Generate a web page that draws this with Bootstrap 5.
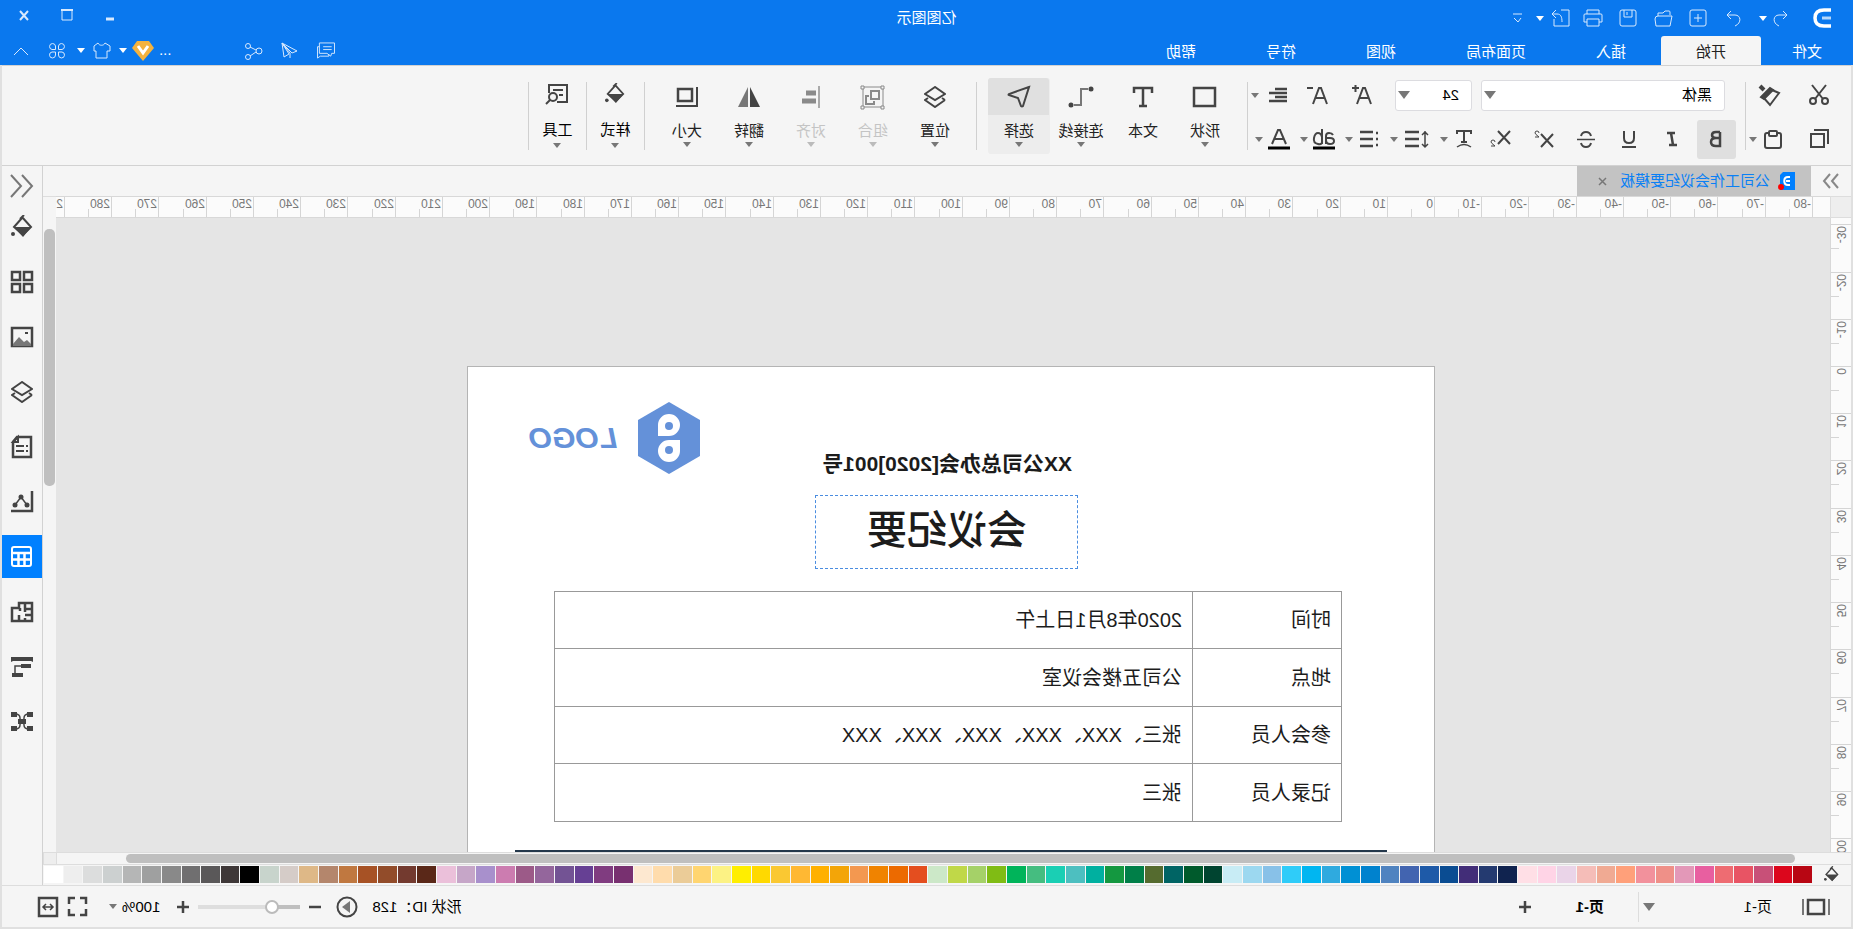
<!DOCTYPE html>
<html lang="zh-CN">
<head>
<meta charset="utf-8">
<meta name="viewport" content="width=device-width, initial-scale=1">
<title>亿图图示</title>
<link href="https://cdn.jsdelivr.net/npm/bootstrap@5.3.0/dist/css/bootstrap.min.css" rel="stylesheet">
<style>
  :root { --brand:#0a78ee; --panel:#f5f5f5; --line:#d2d2d2; --ink:#444; }
  body { font-family:"Liberation Sans","Noto Sans CJK SC",sans-serif; font-size:15px; line-height:20px; color:#111; background:#e0e0e0; overflow:hidden; }
  /* the whole window is shown flipped left to right */
  .app { height:100vh; transform:scaleX(-1); }
  .app button { border:0; background:none; padding:0; color:inherit; display:inline-flex; align-items:center; justify-content:center; flex:none; }
  svg { display:block; fill:none; stroke:currentColor; stroke-width:2; overflow:visible; }
  svg.solid { stroke:none; fill:currentColor; }
  .thin svg { stroke-width:1; }
  .caret { width:10px; }
  .caret::before { content:""; border:4px solid transparent; border-top:5px solid #777; border-bottom:0; }
  .titlebar { background:var(--brand); color:#d8e9fd; }
  .titlebar .caret::before { border-top-color:#fff; }
  .title-row { height:36px; padding:0 3px; }
  .title-row > div { flex:1 1 0; }
  .win-btns { height:30px; }
  .menu-row { height:29px; padding-right:3px; }
  .w12{width:12px} .w24{width:24px} .w28{width:28px} .w30{width:30px} .w35{width:35px} .w36{width:36px} .w43{width:43px} .w44{width:44px}
  .menu-tab { color:#fff; text-decoration:none; padding:6px 35px 3px; height:29px; }
  .menu-tab.first { padding-left:31px; padding-right:31px; }
  .menu-tab.active { background:var(--panel); color:#222; border-radius:3px 3px 0 0; }
  .frame { border:solid #e0e0e0; border-width:0 2px 2px; min-height:0; background:var(--panel); color:var(--ink); }
  .ribbon { height:101px; border:solid var(--line); border-width:1px 0; }
  .rule { width:1px; height:68px; background:#d0d0d0; margin-top:16px; flex:none; }
  .two-rows { display:grid; grid-template-rows:44px 44px; margin-top:7px; }
  .two-rows > div { display:flex; align-items:center; }
  .clip-gap { margin-right:13px; }
  .pick { appearance:none; border:1px solid #dcdce0; border-radius:3px; height:31px; color:#000; font-size:15px; padding:0 12px;
    background:#fff url("data:image/svg+xml,%3Csvg xmlns='http://www.w3.org/2000/svg' width='12' height='8'%3E%3Cpath d='M0 0h12L6 8z' fill='%23777'/%3E%3C/svg%3E") no-repeat right 2px center; }
  .pick.family { width:244px; margin-left:11px; } .pick.size { width:77px; margin:0 11px 0 9px; }
  .bold-on { width:39px; height:39px; background:#dfdfdf !important; border-radius:3px; margin-right:3px; }
  .combo { width:40px; display:flex; } .combo button:first-child { flex:1; }
  .combo + .combo { margin-left:5px; }
  .combo.wide { width:45px; }
  .tool { width:62px; height:76px; flex-direction:column; justify-content:flex-start !important; color:#222 !important; border-radius:3px; }
  .tool .ico { height:37px; width:61px; display:flex; align-items:center; justify-content:center; color:var(--ink); }
  .tool .txt { margin-top:6px; height:20px; } .tool .caret { margin-top:1px; height:6px; display:flex; justify-content:center; }
  .tool.active { background:#ededed; } .tool.active .ico { background:#e0e0e0; border-radius:3px 3px 0 0; }
  .tool:disabled { color:#c4c4c4 !important; } .tool:disabled .ico { color:#8a8a8a; } .tool:disabled .caret::before { border-top-color:#bbb; }
  .tool.black { width:57px; color:#000 !important; } .tool.black .ico { width:57px; height:32px; } .tool.black .txt { margin-top:10px; } .tool.black .caret { margin-top:3px; }
  .tools { margin-top:12px; }
  .doc-tabs { height:30px; } .doc-tabs > button { width:40px; color:#888; }
  .doc-tab { width:234px; background:#c3c3c3; color:#0a80f5; padding:0 20px 0 16px; }
  .doc-tab button { color:#777; }
  .work { display:grid; grid-template-columns:21px 1fr 13px; grid-template-rows:22px 1fr 13px; min-height:0; }
  .corner { background:#eee; border:solid #ddd; border-width:1px 1px 1px 0; }
  .ruler-h { display:flex; overflow:hidden; background:#fbfbfb; border:solid #d8d8d8; border-width:1px 0; color:#777; font-size:12px; line-height:14px; }
  .tick-h { flex:none; border-left:1px solid #d5d5d5; padding-left:1px; background:linear-gradient(#d5d5d5,#d5d5d5) 22px 100%/1px 8px no-repeat; }
  .ruler-v { overflow:hidden; background:#fbfbfb; border-right:1px solid #d8d8d8; color:#777; font-size:12px; line-height:14px; }
  .tick-v { border-top:1px solid #d5d5d5; padding:1px 0 0 3px; background:linear-gradient(#d5d5d5,#d5d5d5) 100% 23px/8px 1px no-repeat; }
  .tick-v span { display:block; writing-mode:vertical-rl; transform:rotate(180deg); width:14px; }
  .scroll-v { grid-column:3; grid-row:1/3; display:flex; flex-direction:column; padding:1px 1px 0; border-top:1px solid #ddd; }
  .scroll-h { grid-column:1/3; display:flex; padding:1px 0; border:1px solid #ddd; border-left:0; }
  .thumb { background:#bfbfbf; border-radius:5px; }
  .canvas { background:#e5e5e5; overflow:hidden; padding:148px 0 0 395px; min-height:0; }
  .sheet { width:968px; height:1368px; background:#fff; border:1px solid #b4b4b4; color:#1c1c1c; font-size:20px; line-height:28px; }
  .sheet-head { display:grid; padding:35px 61px 0 8px; height:224px; }
  .sheet-head > * { grid-area:1/1; }
  .brand-mark { justify-self:end; align-self:start; color:#6491d9; font:italic bold 30px/34px "Liberation Sans",sans-serif; gap:21px; }
  .sheet-title { padding:48px 0 0 61px; }
  .doc-no { font-size:21px; font-weight:700; line-height:28px; }
  .dashed { border:1px dashed #4a8de0; width:263px; height:74px; margin:17px auto 0; font-size:40px; line-height:68px; font-weight:500; }
  .facts { width:788px; margin-left:92px; border-collapse:collapse; }
  .facts th, .facts td { border:1px solid #999; height:57px; padding:0 10px; font-weight:400; }
  .facts tr:nth-child(even) > * { height:58px; }
  .facts th { width:149px; }
  .sheet hr { margin:28px 47px 0; border:0; height:2px; background:#24384c; opacity:1; }
  .palette { height:20px; padding:1px 1px 2px 0; } .palette .pour { width:39px; }
  .palette .chips { gap:1px; } .palette .chips i { flex:1 1 0; }
  .side { width:41px; border-left:1px solid var(--line); gap:12px; } .side button { height:43px; width:40px; }
  .side button.more { height:39px; margin-bottom:-12px; color:#777; }
  .side .active { background:#0080ff; color:#fff; }
  .status { height:42px; border-top:1px solid #ddd; color:#000; } .status svg { color:var(--ink); }
  .status .sep { width:1px; height:30px; background:#ddd; margin:0 34px 0 4px; }
  .zoomer { appearance:none; width:102px; height:14px; background:linear-gradient(90deg,#bfbfbf 27px,#dedede 27px) center/100% 4px no-repeat; }
  .zoomer::-webkit-slider-thumb { appearance:none; width:14px; height:14px; border-radius:50%; background:#fff; border:2px solid #bbb; }
</style>
</head>
<body>
<svg class="d-none">
  <symbol id="bucket" viewBox="0 0 22 24"><path d="M9 0l4 4M11 2L2 12l8 8 9-8-8-9" stroke-width="2"/><path d="M2 12h17l-9 10z" fill="currentColor" stroke="none"/><circle cx="20" cy="19" r="2" fill="currentColor" stroke="none"/></symbol>
  <symbol id="layers" viewBox="0 0 22 22"><path d="M11 1l10 7-10 6L1 8zM1 14l10 7 10-7-3-2M1 14l3-2"/></symbol>
  <symbol id="comments" viewBox="0 0 20 18"><path d="M1 1h16v11H9l-4 3-1-3H1zM17 5h2v12l-3-2H7v-2M4 5h9M4 8h9"/></symbol>
</svg>
<div class="app d-flex flex-column">
  <header class="titlebar thin">
    <div class="title-row d-flex">
      <div class="d-flex align-items-center">
        <svg class="me-3" width="18" height="20" style="color:#fff;margin-left:19px"><path d="M0 2h7q9 0 9 8t-9 8H0" stroke-width="3.500"/><path d="M0 10h9" stroke-width="3" opacity=".7"/></svg>
        <button class="w24 ms-1" aria-label="撤销"><svg width="15" height="17"><path d="M5 1L1 5l4 4M1 5h8c6 0 7 8 0 11"/></svg></button><button class="caret w12" aria-label="撤销列表"></button>
        <button class="w35" style="margin-left:6px" aria-label="重做"><svg width="15" height="17"><path d="M10 1l4 4-4 4M14 5H6c-6 0-7 8 0 11"/></svg></button>
        <button class="w35" aria-label="新建"><svg width="18" height="18"><rect x="1" y="1" width="16" height="16" rx="2"/><path d="M9 5v8M5 9h8"/></svg></button>
        <button class="w35" aria-label="打开"><svg width="19" height="17"><path d="M3 5V2q0-1 1-1h4l2 2h5v3M1 6h14q3 0 3 3l-1 7H3z"/></svg></button>
        <button class="w35" aria-label="保存"><svg width="18" height="18"><rect x="1" y="1" width="16" height="16" rx="2"/><path d="M5 1v7h8V1M10 3v3"/></svg></button>
        <button class="w35" aria-label="打印"><svg width="20" height="18"><path d="M4 5V1h12v4M4 13H1V6q0-1 1-1h16q1 0 1 1v7h-3M4 10h12v7H4z"/></svg></button>
        <button class="w30" aria-label="导出"><svg width="18" height="18"><path d="M9 1H1v16h15V10M17 5h-4c-4 0-5 3-5 8M14 1l4 4-4 4"/></svg></button><button class="caret w12" aria-label="导出选项"></button>
        <button class="w12" style="margin-left:10px" aria-label="自定义"><svg width="9" height="10"><path d="M0 1h9M1 5l3 4 4-4"/></svg></button>
      </div>
      <span class="align-self-center text-white">亿图图示</span>
      <div class="win-btns d-flex justify-content-end">
        <button class="w43" aria-label="最小化"><svg width="8" height="10"><path d="M0 9h8" stroke-width="3"/></svg></button>
        <button class="w43" aria-label="最大化"><svg width="12" height="12"><path d="M1 1h10v10H1z"/><path d="M0 1h12" stroke-width="2"/></svg></button>
        <button class="w43" aria-label="关闭"><svg width="10" height="9"><path d="M1 0l8 9M9 0L1 9" stroke-width="2"/></svg></button>
      </div>
    </div>
    <div class="menu-row d-flex">
      <a href="#" class="menu-tab first">文件</a><a href="#" class="menu-tab active">开始</a><a href="#" class="menu-tab">插入</a><a href="#" class="menu-tab">页面布局</a><a href="#" class="menu-tab">视图</a><a href="#" class="menu-tab">符号</a><a href="#" class="menu-tab">帮助</a>
      <button class="w36 ms-auto" aria-label="评论"><svg width="20" height="17"><use href="#comments"/></svg></button>
      <button class="w36" aria-label="发送"><svg width="17" height="17"><path d="M16 1L1 9l5 2zM16 1l-2 14-5-3zM16 1L8 11v5"/></svg></button>
      <button class="w36" aria-label="分享"><svg width="18" height="18"><circle cx="4" cy="9" r="3"/><circle cx="15" cy="4" r="2.500"/><circle cx="15" cy="15" r="2.500"/><path d="M7 8l6-3M7 10l6 4"/></svg></button>
      <span class="text-white ps-1 pt-1" style="margin-left:60px">...</span>
      <button class="w28" style="margin-left:2px" aria-label="会员"><svg class="solid" width="22" height="20"><path d="M5 0h12l5 7-11 13L0 7z" fill="#f3b23f"/><path d="M6 5l5 7 5-7" stroke="#fff" stroke-width="3" fill="none"/></svg></button><button class="caret w12" aria-label="会员选项"></button>
      <button class="w30" aria-label="皮肤"><svg width="18" height="17"><path d="M6 1L1 4v5h3v7h11V9h2V4l-4-3c-1 3-6 3-7 0z"/></svg></button><button class="caret w12" aria-label="皮肤选项"></button>
      <button class="w36" aria-label="应用"><svg width="18" height="17"><path d="M7.500 7.500H4a3 3 0 1 1 3.500-3.500zM10.500 7.500V4A3 3 0 1 1 14 7.500zM7.500 10v3A3 3 0 1 1 4 10zM10.500 10H14a3 3 0 1 1-3.500 3z"/></svg></button>
      <button class="w36" aria-label="收起"><svg width="14" height="8"><path d="M0 8l7-7 7 7"/></svg></button>
    </div>
  </header>

  <div class="frame d-flex flex-column flex-grow-1">
    <div class="ribbon d-flex flex-shrink-0">
      <div class="two-rows" style="margin-left:14px">
        <div><button class="w36 clip-gap" aria-label="剪切"><svg width="20" height="20"><circle cx="4" cy="16" r="3"/><circle cx="16" cy="16" r="3"/><path d="M3 0l11 14M17 0L6 14"/></svg></button><button class="w36" aria-label="格式刷"><svg width="22" height="21"><path d="M21 1l-4 4" stroke-width="4"/><path d="M11 3l9 9-3 2-9-9z" fill="currentColor"/><path d="M9 5L2 8l9 12 7-8"/></svg></button></div>
        <div><button class="w36 clip-gap" aria-label="复制"><svg width="20" height="20"><path d="M5 5h13v13H5zM1 15V1h14"/></svg></button><button class="w30" aria-label="粘贴"><svg width="18" height="19"><rect x="1" y="3" width="16" height="15" rx="2"/><rect x="5" y="1" width="8" height="5" rx="1" fill="#f5f5f5"/></svg></button><button class="caret" aria-label="粘贴选项"></button></div>
      </div>
      <div class="rule" style="margin-left:2px"></div>
      <div class="two-rows" style="margin-left:9px">
        <div>
          <select class="pick family" aria-label="字体"><option>黑体</option></select><select class="pick size" aria-label="字号"><option>24</option></select>
          <button class="w44" aria-label="增大字号"><svg width="20" height="20"><path d="M1 19L7 3h2l6 16M3 13h10M13 3h7M16.500 0v7" /></svg></button>
          <button class="w44" aria-label="减小字号"><svg width="20" height="20"><path d="M1 19L7 3h2l6 16M3 13h10M15 3h6"/></svg></button>
          <button class="w36" aria-label="对齐"><svg width="18" height="14"><path d="M0 1h12M0 5h18M0 9h12M0 13h18" stroke-width="2.500"/></svg></button><button class="caret" aria-label="对齐选项"></button>
        </div>
        <div>
          <button class="bold-on" aria-label="加粗"><svg width="12" height="16"><path d="M2 1v14h4q5 0 5-4t-5-4H2M2 1h4q4 0 4 3t-4 3" stroke-width="2.500"/></svg></button>
          <button class="w43" aria-label="斜体"><svg width="12" height="14"><path d="M3 1h8M1 13h8M7 1L5 13" stroke-width="2.500"/></svg></button>
          <button class="w43" aria-label="下划线"><svg width="14" height="17"><path d="M2 0v7q0 5 5 5t5-5V0M0 16h14"/></svg></button>
          <button class="w43" aria-label="删除线"><svg width="18" height="17"><path d="M14 5Q13 1 9 1T4 5M4 12q1 4 5 4t5-4"/><path d="M0 8.500h18" stroke-width="1.500"/></svg></button>
          <button class="w43" aria-label="上标"><svg width="21" height="18"><path d="M1 4l12 13M13 4L1 17"/><path d="M15 3q0-2 2-2t2 2q0 1-4 4h4" stroke-width="1"/></svg></button>
          <button class="w43" aria-label="下标"><svg width="21" height="18"><path d="M1 1l12 13M13 1L1 14"/><path d="M16 12q0-2 2-2t2 2q0 1-4 4h4" stroke-width="1"/></svg></button>
          <span class="combo"><button aria-label="文字方向"><svg width="16" height="18"><path d="M1 4V1h14v3M8 1v11M5 12h6"/><path d="M1 17q7-5 14 0" stroke-width="1.500"/></svg></button><button class="caret" aria-label="文字方向选项"></button></span>
          <span class="combo wide"><button aria-label="行距"><svg width="23" height="17"><path d="M9 1h14M9 8h14M9 15h14" stroke-width="2.500"/><path d="M3 0v16M0 4l3-3 3 3M0 13l3 3 3-3" stroke-width="1.500"/></svg></button><button class="caret" aria-label="行距选项"></button></span>
          <span class="combo"><button aria-label="项目符号"><svg width="18" height="17"><path d="M0 2h2M0 8h2M0 14h2M5 1h13M5 8h13M5 15h13" stroke-width="2.500"/></svg></button><button class="caret" aria-label="项目符号选项"></button></span>
          <span class="combo"><button aria-label="突出显示"><svg width="22" height="20"><path d="M2 6q1-2 4-2 3 0 3 3v8M9 9H5q-4 0-4 3t4 3q4 0 4-4M13 0v15M13 8q1-4 4-4t4 5-4 6-4-4"/><path d="M0 19h22" stroke="#000" stroke-width="3"/></svg></button><button class="caret" aria-label="突出显示选项"></button></span>
          <span class="combo"><button aria-label="字体颜色"><svg width="22" height="20"><path d="M4 15l6-14h2l6 14M6 10h10"/><path d="M0 19h22" stroke="#000" stroke-width="3"/></svg></button><button class="caret" aria-label="字体颜色选项"></button></span>
        </div>
      </div>
      <div class="rule" style="margin-left:2px"></div>
      <div class="tools d-flex" style="margin-left:11px">
        <button class="tool"><span class="ico"><svg width="23" height="20"><path d="M1 1h21v18H1z" stroke-width="2.500"/></svg></span><span class="txt">形状</span><span class="caret"></span></button>
        <button class="tool"><span class="ico"><svg width="20" height="20"><path d="M1 6V1h18v5M10 1v17M6 19h8" stroke-width="2.500"/></svg></span><span class="txt">文本</span></button>
        <button class="tool"><span class="ico"><svg width="24" height="20"><circle cx="2" cy="2" r="2.500" fill="currentColor" stroke="none"/><circle cx="22" cy="18" r="2.500" fill="currentColor" stroke="none"/><path d="M5 2h7v16h7" stroke="#777"/></svg></span><span class="txt">连接线</span><span class="caret"></span></button>
        <button class="tool active"><span class="ico"><svg width="22" height="22"><path d="M1 1l20 7q1 1 0 1l-9 3-3 8q-1 1-2 0z"/></svg></span><span class="txt">选择</span><span class="caret"></span></button>
      </div>
      <div class="rule" style="margin-left:11px"></div>
      <div class="tools d-flex" style="margin-left:10px">
        <button class="tool"><span class="ico"><svg width="22" height="22"><use href="#layers"/></svg></span><span class="txt">位置</span><span class="caret"></span></button>
        <button class="tool" disabled><span class="ico"><svg width="24" height="24"><path d="M2 2h20v20H2z" stroke-width="1"/><path d="M6 6h8v8H6zM16 11h3v8h-8v-3"/><path d="M1 1h3v3H1zM21 1h3v3h-3zM1 21h3v3H1zM21 21h3v3h-3z" fill="#f5f5f5" stroke-width="1"/></svg></span><span class="txt">组合</span><span class="caret"></span></button>
        <button class="tool" disabled><span class="ico"><svg width="18" height="22"><path d="M1 0v22" stroke="#aaa"/><path d="M4 7h10M4 15h14" stroke-width="5"/></svg></span><span class="txt">对齐</span><span class="caret"></span></button>
        <button class="tool"><span class="ico"><svg class="solid" width="22" height="20"><path d="M10 0v20H0z" fill="#444"/><path d="M12 0v20h10z" fill="#777"/></svg></span><span class="txt">翻转</span><span class="caret"></span></button>
        <button class="tool"><span class="ico"><svg width="22" height="20"><path d="M6 2h14v12H6z" stroke-width="2.500"/><path d="M1 0v19h21"/></svg></span><span class="txt">大小</span><span class="caret"></span></button>
      </div>
      <div class="rule" style="margin-left:11px"></div>
      <div class="tools d-flex"><button class="tool black"><span class="ico"><svg width="20" height="22"><use href="#bucket"/></svg></span><span class="txt">样式</span><span class="caret"></span></button></div>
      <div class="rule"></div>
      <div class="tools d-flex"><button class="tool black"><span class="ico"><svg width="22" height="20"><path d="M11 18H1V1h18v8M5 6h10M5 11h4"/><circle cx="15" cy="13" r="4"/><path d="M18 16l4 4"/></svg></span><span class="txt">工具</span><span class="caret"></span></button></div>
      <div class="rule"></div>
    </div>

    <div class="d-flex flex-grow-1" style="min-height:0">
      <main class="d-flex flex-column flex-grow-1" style="min-width:0">
        <div class="doc-tabs d-flex flex-shrink-0">
          <button aria-label="展开"><svg width="16" height="16"><path d="M1 1l6 7-6 7M9 1l6 7-6 7" stroke-width="2"/></svg></button>
          <div class="doc-tab d-flex align-items-center">
            <svg class="solid" width="15" height="18"><path d="M0 0h12l3 3v15H0z" fill="#0080ff"/><path d="M5 5h2c5 0 5 8 0 8H5M5 9h4" stroke="#fff" stroke-width="2" fill="none"/><circle cx="14" cy="15" r="3" fill="red"/></svg>
            <span style="margin-left:10px">公司工作会议纪要模板</span><button class="ms-auto w12" aria-label="关闭文档"><svg width="9" height="9"><path d="M1 1l7 7M8 1L1 8" stroke-width="1.500"/></svg></button>
          </div>
        </div>
        <div class="work flex-grow-1">
          <div class="corner"></div>
          <div class="ruler-h" id="rulerH"></div>
          <div class="ruler-v" id="rulerV"></div>
          <div class="canvas">
            <div class="sheet">
              <div class="sheet-head">
                <div class="sheet-title text-center"><div class="doc-no">XX公司总办会[2020]001号</div><div class="dashed">会议纪要</div></div>
                <div class="brand-mark d-flex align-items-center"><svg class="solid" width="62" height="72"><path d="M31 0l31 18v36L31 72 0 54V18z"/><path d="M42 34H31a11 11 0 1 1 11-11zM20 38h11a11 11 0 1 1-11 11z" fill="#fff"/><circle cx="31" cy="24" r="4"/><circle cx="31" cy="48" r="4"/></svg><span>LOGO</span></div>
              </div>
              <table class="facts">
                <tr><th scope="row">时间</th><td>2020年8月1日上午</td></tr>
                <tr><th scope="row">地点</th><td>公司五楼会议室</td></tr>
                <tr><th scope="row">参会人员</th><td>张三、XXX、XXX、XXX、XXX、XXX</td></tr>
                <tr><th scope="row">记录人员</th><td>张三</td></tr>
              </table>
              <hr>
            </div>
          </div>
          <div class="scroll-v"><div style="flex:31"></div><div class="thumb" style="flex:257"></div><div style="flex:365"></div></div>
          <div class="scroll-h"><div style="flex:56"></div><div class="thumb" style="flex:1669"></div><div style="flex:69"></div></div>
          <div class="corner"></div>
        </div>
        <div class="palette d-flex flex-shrink-0">
          <button class="pour" aria-label="填充"><svg width="15" height="17"><use href="#bucket"/></svg></button>
          <div class="chips d-flex flex-grow-1" id="chips"></div>
        </div>
      </main>
      <nav class="side d-flex flex-column flex-shrink-0" aria-label="面板">
        <button class="more" aria-label="折叠"><svg width="22" height="22"><path d="M11 0L1 11l10 11M22 0L12 11l10 11"/></svg></button>
        <button aria-label="填充"><svg width="22" height="24"><use href="#bucket"/></svg></button>
        <button aria-label="符号库"><svg width="22" height="22" ><path d="M1 1h8v8H1zM13 1h8v8h-8zM1 13h8v8H1zM13 13h8v8h-8z" stroke-width="2.500"/></svg></button>
        <button aria-label="图片"><svg width="22" height="20"><path d="M1 1h20v18H1z" stroke-width="2.500"/><path d="M2 17l4-4 3 2 5-5 6 7v2H2z" fill="#777" stroke="none"/><path d="M5 6h3"/></svg></button>
        <button aria-label="图层"><svg width="22" height="22"><use href="#layers"/></svg></button>
        <button aria-label="文档"><svg width="20" height="22"><path d="M1 1h14l4 5v15H1z" stroke-width="2.500"/><path d="M14 1l5 5h-5zM4 10h2M4 15h2M8 10h8M8 15h8"/></svg></button>
        <button aria-label="图表"><svg width="22" height="21"><path d="M1 0v20h21" stroke-width="2.500"/><path d="M6 14l6-8 6 8" stroke-width="1.500"/><g fill="currentColor" stroke="none"><circle cx="6" cy="14" r="2.500"/><circle cx="12" cy="6" r="2.500"/><circle cx="18" cy="14" r="2.500"/></g></svg></button>
        <button class="active" aria-label="表格"><svg width="21" height="21"><rect x="1" y="1" width="19" height="19" rx="2"/><path d="M1 7h19M1 13.500h19M7.500 7v13M13.500 7v13" stroke-width="2.500"/></svg></button>
        <button aria-label="平面图"><svg width="22" height="20"><path d="M1 1h13v5h7v13H1zM1 7h7V1M8 7v3M1 13h7M13 6v3M14 19v-6M8 16v3" stroke-width="2.500"/></svg></button>
        <button aria-label="甘特图"><svg class="solid" width="22" height="20"><path d="M0 0h22v5l-2-1H2L0 5zM2 7h10v4H2zM10 16h11v4H10z"/><path d="M12 9h6v7" stroke="currentColor" stroke-width="1.500" fill="none"/></svg></button>
        <button aria-label="思维导图"><svg width="22" height="19"><path d="M4 2q5 0 5 4t2 4q2 0 2-4t5-4M4 17q5 0 5-4t2-4q2 0 2 4t5 4" stroke-width="1.500"/><path d="M0 2.500h6M16 2.500h6M0 16.500h6M16 16.500h6M7 9.500h8" stroke-width="5"/></svg></button>
      </nav>
    </div>

    <footer class="status d-flex align-items-center flex-shrink-0">
      <svg width="28" height="16" style="margin-left:21px"><path d="M1 0v16M27 0v16" stroke="#777"/><path d="M6 1h16v14H6z" stroke-width="2.500"/></svg>
      <span style="margin-left:30px;width:117px">页-1</span>
      <button aria-label="选择页面"><svg class="solid" width="12" height="8"><path d="M0 0h12L6 8z" fill="#777"/></svg></button><div class="sep"></div>
      <button class="fw-bold">页-1</button>
      <button class="w36 me-auto" style="margin-left:33px" aria-label="添加页面"><svg width="12" height="12"><path d="M6 0v12M0 6h12" stroke-width="2.500"/></svg></button>
      <span>形状 ID：128</span>
      <button class="w30 ms-2 me-1 ps-1" aria-label="演示"><svg width="22" height="22"><circle cx="11" cy="11" r="9.500"/><path d="M16 11L8 5v12z" fill="#777" stroke="none"/></svg></button>
      <button class="w30" aria-label="缩小"><svg width="12" height="12"><path d="M0 6h12" stroke-width="2.500"/></svg></button>
      <input type="range" class="zoomer m-0" min="0" max="100" value="24" aria-label="缩放">
      <button class="w30" aria-label="放大"><svg width="12" height="12"><path d="M6 0v12M0 6h12" stroke-width="2.500"/></svg></button>
      <span class="ms-2">100%</span><button class="caret ms-1" aria-label="缩放比例"></button>
      <button class="w24" style="margin-left:18px" aria-label="全屏"><svg width="19" height="19"><path d="M1 7V1h6M12 1h6v6M18 12v6h-6M7 18H1v-6" stroke-width="2.500"/></svg></button>
      <button class="w24" style="margin:0 34px 0 6px" aria-label="适合宽度"><svg width="20" height="20"><path d="M1 1h18v18H1z" stroke-width="2.500"/><path d="M5 10h10M8 7l-3 3 3 3M12 7l3 3-3 3" stroke-width="1.500"/></svg></button>
    </footer>
  </div>
</div>
<script src="https://cdn.jsdelivr.net/npm/bootstrap@5.3.0/dist/js/bootstrap.bundle.min.js"></script>
<script>
  // one ruler step is 10 mm at 125 % of 96 dpi
  const step = 10 * 96 / 25.4 * 1.25;
  const cells = (origin, from, to, make) => {
    let out = '';
    for (let v = from; v <= to; v += 10) {
      const a = Math.round(origin + v / 10 * step), b = Math.round(origin + (v / 10 + 1) * step);
      out += make(v, b - a);
    }
    return out;
  };
  rulerH.innerHTML = '<div class="flex-shrink-0" style="width:17px"></div>' +
    cells(395, -80, 290, (v, w) => `<div class="tick-h" style="width:${w}px">${v}</div>`);
  rulerV.innerHTML = '<div style="height:6px"></div>' +
    cells(148, -30, 100, (v, h) => `<div class="tick-v" style="height:${h}px"><span>${v}</span></div>`);
  chips.innerHTML = ('b80613 dc061c c85078 e85464 ee6c72 e85fa0 e398b8 ef9088 f2919c ffa07a f0aa93 f5bdb8 ead4e8 ffd4e6 ffdfe6 ' +
    '10234f 243a70 422d78 0a4c92 1e5aa8 4264b0 4f83c0 0082ce 0090d4 2faadf 00b6f1 2fccf9 88c1e8 9cd8f0 c8ecf5 ' +
    '004430 005a2c 006464 556b2f 007f48 149840 00b0a0 4dbfc0 1acfb4 45bd80 00b45a 80bc14 a5d168 c0d848 cce8c8 ' +
    'e44e1f ec6a00 f08300 f39850 f3a508 ffb000 ffb833 fac832 ffd900 ffee00 fcf284 ffd570 ebcc98 ffdcac fde8d0 ' +
    '783070 803c80 664094 735394 94669c 9c5a88 cc7cb0 a890cc c6a6c8 ebc0da 5a2818 733a2f 924c2a a75225 c07840 b4866c deb887 ' +
    'd5ccc8 c8d4cc 000000 3e3737 5a5859 706f70 898989 9fa0a0 b5b6b6 ccd0d0 dcdddd eeeeee ffffff')
    .split(' ').map(c => `<i style="background:#${c}"></i>`).join('');
</script>
</body>
</html>
